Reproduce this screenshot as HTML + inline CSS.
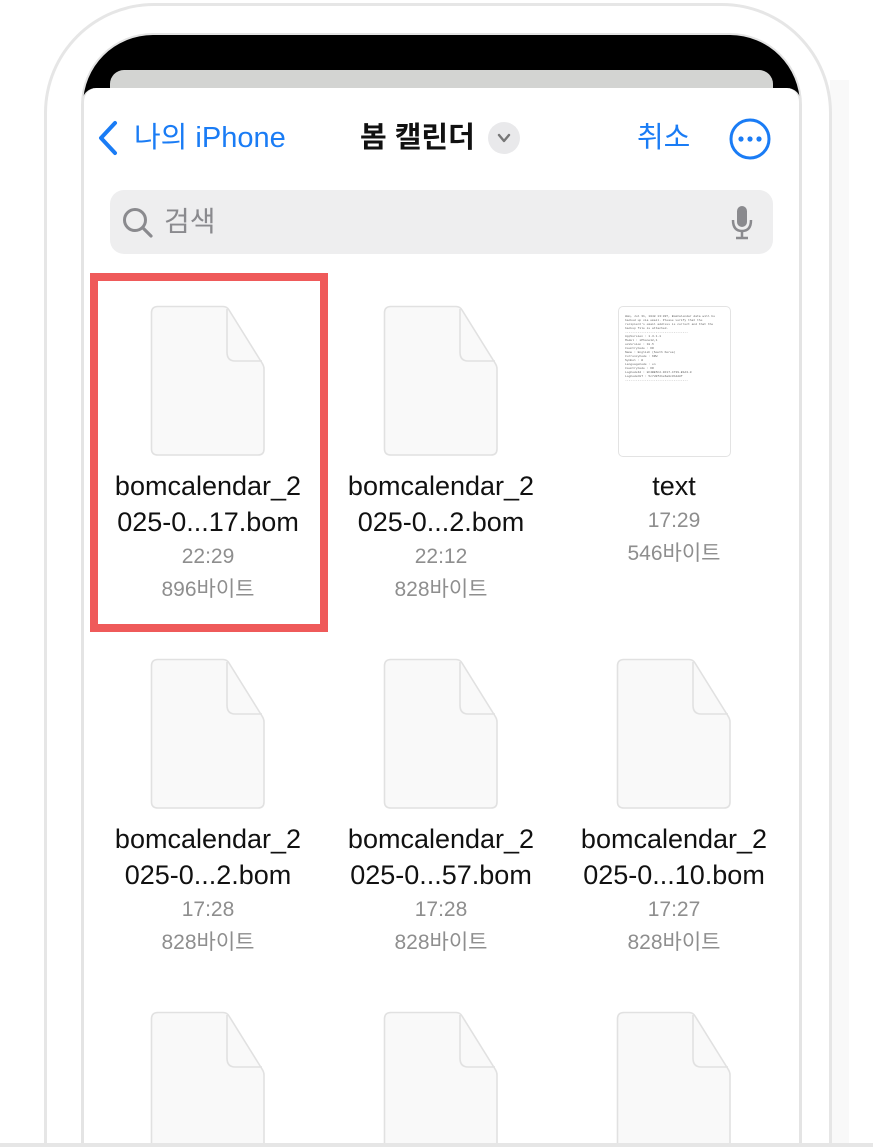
<!DOCTYPE html>
<html style="width:873px;height:1147px;overflow:hidden"><head><meta charset="utf-8"><style>
*{margin:0;padding:0;box-sizing:border-box}
body{width:873px;height:1147px;background:#fff;position:relative;overflow:hidden;font-family:"Liberation Sans","Noto Sans CJK KR",sans-serif}
.abs{position:absolute}
.lbl{position:absolute;width:230px;text-align:center}
.n{font-size:27px;color:#111;line-height:36px}
.g{font-size:21px;color:#8e8e8e;line-height:33px}
</style></head><body>
<div class="abs" style="left:830px;top:80px;width:19px;height:1067px;background:#f9f9f9"></div>
<div class="abs" style="left:44px;top:3px;width:788px;height:1144px;border:3px solid #e6e6e6;border-bottom:none;border-radius:110px 110px 0 0;background:#fff"></div>
<div class="abs" style="left:81px;top:33px;width:721px;height:1114px;background:#000;border-radius:72px 72px 0 0;border:2px solid #e4e4e4;border-bottom:none"></div>
<div class="abs" style="left:110px;top:70px;width:663px;height:60px;background:#d3d4d2;border-radius:14px"></div>
<div class="abs" style="left:82px;top:88px;width:719px;height:1059px;background:#fff;border-radius:14px 14px 0 0;border-left:2px solid #e4e4e4;border-right:2px solid #e4e4e4"></div>

<svg class="abs" style="left:96px;top:120px" width="24" height="36" viewBox="0 0 24 36"><path d="M19 3 L5 18 L19 33" fill="none" stroke="#1a7cf5" stroke-width="4" stroke-linecap="round" stroke-linejoin="round"/></svg>
<div class="abs" style="left:134px;top:119px;font-size:29px;color:#1a7cf5;line-height:38px">나의 iPhone</div>
<div class="abs" style="left:360px;top:119px;font-size:29px;color:#111;font-weight:bold;line-height:38px">봄 캘린더</div>
<div class="abs" style="left:488px;top:122px;width:32px;height:32px;border-radius:50%;background:#e9e9eb"></div>
<svg class="abs" style="left:488px;top:122px" width="32" height="32"><path d="M11 13 L16 19 L21 13" fill="none" stroke="#777" stroke-width="2.4" stroke-linecap="round" stroke-linejoin="round"/></svg>
<div class="abs" style="left:637px;top:119px;font-size:29px;color:#1a7cf5;line-height:38px">취소</div>
<svg class="abs" style="left:728px;top:117px" width="44" height="44"><circle cx="22" cy="22" r="19" fill="none" stroke="#1a7cf5" stroke-width="3"/><circle cx="13" cy="22" r="2.6" fill="#1a7cf5"/><circle cx="22" cy="22" r="2.6" fill="#1a7cf5"/><circle cx="31" cy="22" r="2.6" fill="#1a7cf5"/></svg>

<div class="abs" style="left:110px;top:190px;width:663px;height:64px;background:#eeeeef;border-radius:14px"></div>
<svg class="abs" style="left:120px;top:205px" width="40" height="36"><circle cx="15" cy="15" r="10.5" fill="none" stroke="#8a8a8e" stroke-width="3"/><path d="M23 23 L31 31" stroke="#8a8a8e" stroke-width="3.2" stroke-linecap="round"/></svg>
<div class="abs" style="left:164px;top:204px;font-size:28px;color:#8a8a8e;line-height:36px">검색</div>
<svg class="abs" style="left:728px;top:204px" width="28" height="36"><rect x="9" y="2" width="10" height="21" rx="5" fill="#8a8a8e"/><path d="M5 16 Q5 27 14 27 Q23 27 23 16" fill="none" stroke="#8a8a8e" stroke-width="2.5"/><path d="M14 27 V33 M8 34 H20" stroke="#8a8a8e" stroke-width="2.5"/></svg>

<div class="abs" style="left:90px;top:273px;width:238px;height:359px;border:8px solid #ef5a5a"></div>

<svg width="0" height="0" style="position:absolute"><defs>
<symbol id="f" viewBox="0 0 116 152"><path d="M8 1.5 H73 Q77 1.5 79 5 L112 58 Q114 61 114 64 V144 Q114 150 108 150 H8 Q1.5 150 1.5 144 V8 Q1.5 1.5 8 1.5 Z" fill="#f9f9f9" stroke="#e1e1e1" stroke-width="1.6"/><path d="M77 4 V47 Q77 56 85 56 H112" fill="none" stroke="#e1e1e1" stroke-width="1.6"/></symbol>
</defs></svg>
<svg class="abs" style="left:150px;top:305px" width="116" height="152"><use href="#f"/></svg>
<svg class="abs" style="left:383px;top:305px" width="116" height="152"><use href="#f"/></svg>
<div class="abs" style="left:618px;top:306px;width:113px;height:151px;border:1.5px solid #e3e3e3;border-radius:5px;background:#fff;padding:8px 6px;font-family:'Liberation Mono',monospace;font-size:3px;line-height:4px;color:#666;overflow:hidden">Hmm, Jul 31, 1048 13:09?, BomCalendar data will be backed up via email. Please verify that the recipient's email address is correct and that the backup file is attached.<br>-----------------------------------<br>AppVersion : 1.3.1.1<br>Model : iPhone12,1<br>osVersion : 18.5<br>CountryCode : KR<br>Name : English (South Korea)<br>CurrencyCode : KRW<br>Symbol : W<br>LanguageCode : en<br>CountryCode : KR<br>LogCodeId : 8C4BE5C2-9F17-4739-B1A3-0<br>LogCodeCGT : 5c7d9f21e6a0c3b4d8f<br>-----------------------------------</div>
<svg class="abs" style="left:150px;top:658px" width="116" height="152"><use href="#f"/></svg>
<svg class="abs" style="left:383px;top:658px" width="116" height="152"><use href="#f"/></svg>
<svg class="abs" style="left:616px;top:658px" width="116" height="152"><use href="#f"/></svg>
<svg class="abs" style="left:150px;top:1011px" width="116" height="152"><use href="#f"/></svg>
<svg class="abs" style="left:383px;top:1011px" width="116" height="152"><use href="#f"/></svg>
<svg class="abs" style="left:616px;top:1011px" width="116" height="152"><use href="#f"/></svg>

<div class="lbl" style="left:93px;top:468px"><div class="n">bomcalendar_2<br>025-0...17.bom</div><div class="g">22:29<br>896바이트</div></div>
<div class="lbl" style="left:326px;top:468px"><div class="n">bomcalendar_2<br>025-0...2.bom</div><div class="g">22:12<br>828바이트</div></div>
<div class="lbl" style="left:559px;top:468px"><div class="n">text</div><div class="g">17:29<br>546바이트</div></div>
<div class="lbl" style="left:93px;top:821px"><div class="n">bomcalendar_2<br>025-0...2.bom</div><div class="g">17:28<br>828바이트</div></div>
<div class="lbl" style="left:326px;top:821px"><div class="n">bomcalendar_2<br>025-0...57.bom</div><div class="g">17:28<br>828바이트</div></div>
<div class="lbl" style="left:559px;top:821px"><div class="n">bomcalendar_2<br>025-0...10.bom</div><div class="g">17:27<br>828바이트</div></div>
<div class="abs" style="left:0;top:1143px;width:873px;height:4px;background:#e6e6e6"></div>
</body></html>
